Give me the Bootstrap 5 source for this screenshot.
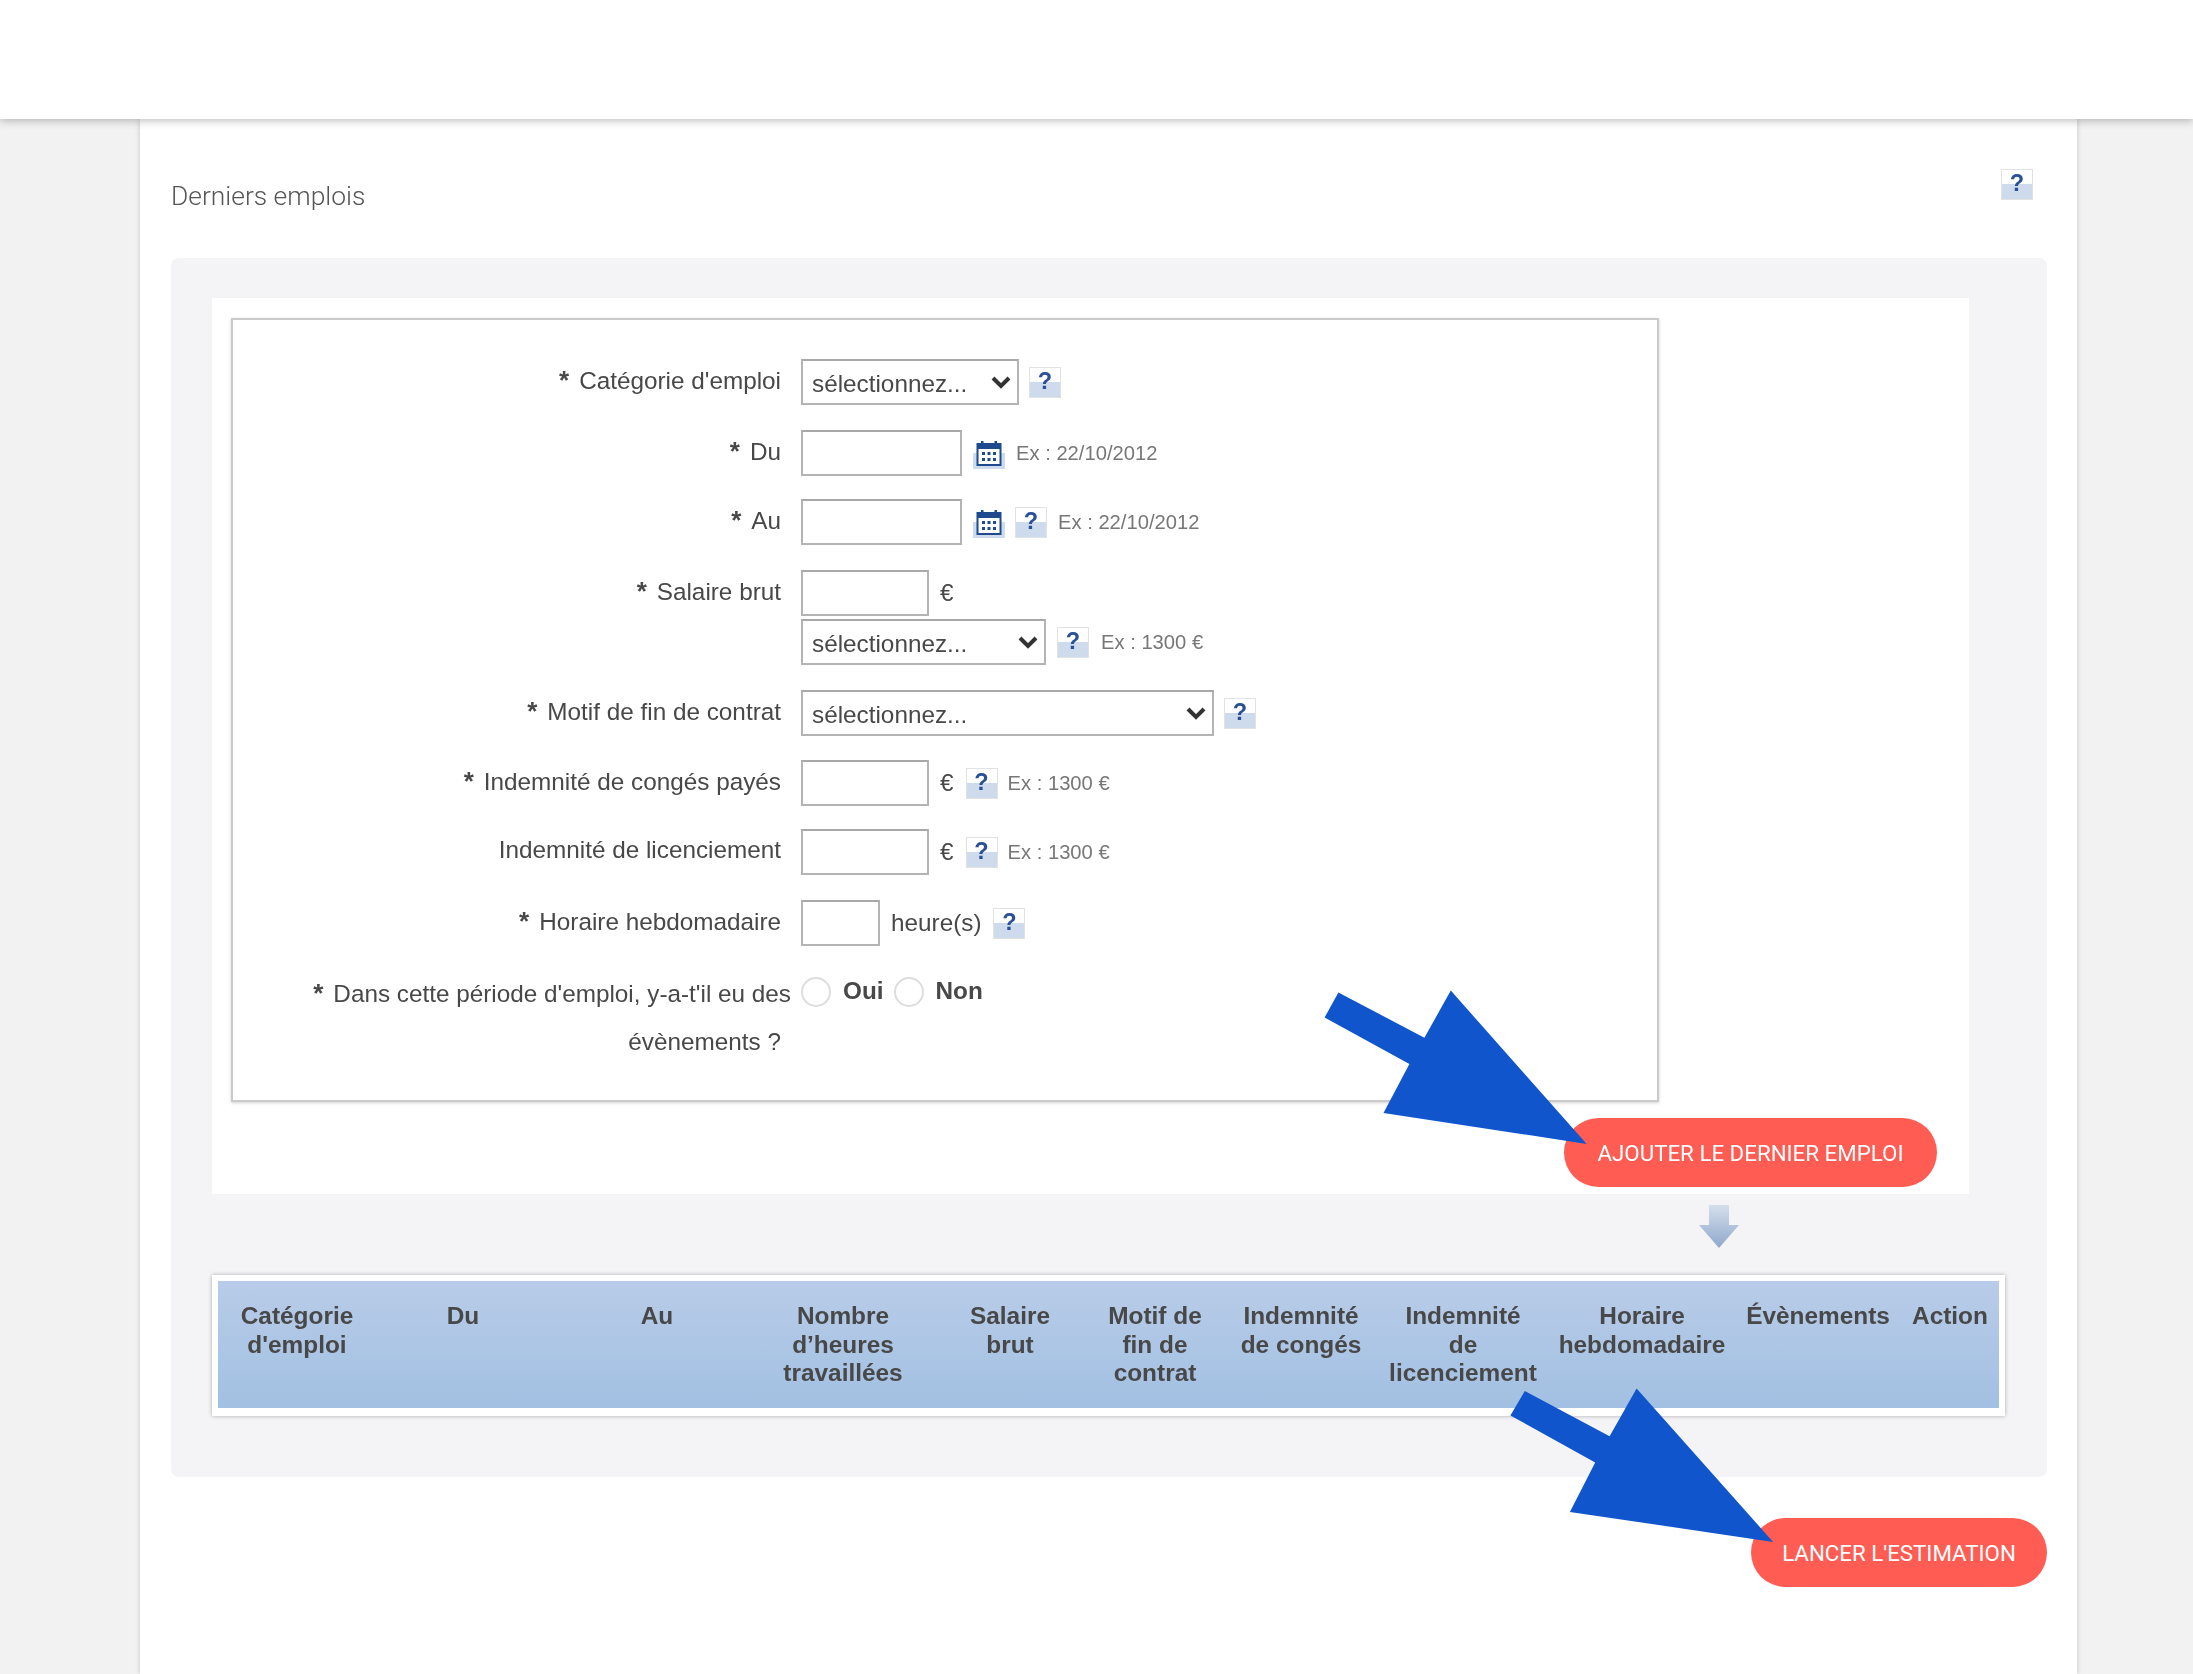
<!DOCTYPE html>
<html lang="fr">
<head>
<meta charset="utf-8">
<title>Derniers emplois</title>
<link href="https://cdn.jsdelivr.net/npm/bootstrap@5.3.0/dist/css/bootstrap.min.css" rel="stylesheet">
<style>
html,body{height:100%;overflow:hidden}
body{background:#f2f2f2;font-family:"Liberation Sans",Arial,sans-serif;color:#484848;position:relative}
.topstrip{height:119px;background:#fff;box-shadow:0 2px 8px rgba(0,0,0,.25);position:relative;z-index:2}
.sheet{margin-left:140px;width:1937px;height:1555px;background:#fff;box-shadow:0 0 5px rgba(0,0,0,.2);padding:0 30px 0 31px}
.softfocus{filter:blur(.7px)}
.titlebar{height:139px;padding-right:14px}
.pagetitle{font-family:Roboto,sans-serif;font-weight:300;font-size:26.4px;color:#555;margin:0;padding-top:62px;line-height:30px}
.titlebar .helpbox{margin-top:50px}
.greypanel{background:#f4f4f6;border-radius:8px;height:1219px;padding:40px 0 0 41px}
.whitepanel{background:#fff;width:1757px;height:896px;padding:20px 32px 0 19px}
.formbox{width:1428px;height:784px;border:2px solid #cbcbcb;box-shadow:0 1px 3px rgba(0,0,0,.18);padding-top:39px;background:#fff}
.frow{display:flex;font-size:24.3px;line-height:46px}
.flabel{width:548px;text-align:right;margin:-2px 20px 0 0;flex:none}
.star{margin-right:10px;font-weight:700;font-size:26px}
.fctl{display:flex;align-items:center;height:46px}
.mb23{margin-bottom:23px}.mb24{margin-bottom:24px}.mb25{margin-bottom:25px}.mb27{margin-bottom:27px}
input.form-control.cellin,select.form-select.cellin{border:2px solid #b4b4b4;border-top-color:#a8a8a8;border-radius:0;height:46px;min-height:0;padding:0 30px 0 9px;font-size:24.3px;color:#484848;font-family:"Liberation Sans",Arial,sans-serif;box-shadow:none;flex:none}
select.form-select.cellin{padding-top:5px;background-image:url("data:image/svg+xml,%3csvg xmlns='http://www.w3.org/2000/svg' viewBox='0 0 20 14'%3e%3cpath fill='none' stroke='%23333' stroke-width='4' d='M2 3l8 8 8-8'/%3e%3c/svg%3e");background-size:20px 14px;background-position:right 6px center}
.w218{width:218px!important}.w160{width:161px!important}.w128{width:128px!important}.w245{width:245px!important}.w413{width:413px!important}.w79{width:79px!important}
.second{margin:3px 0 25px 568px}
.helpbox{display:inline-block;width:32px;height:31px;flex:none;background:linear-gradient(#fff 0 48%,#cddbec 48% 100%);border:1px solid #e2e2e2;color:#2a5198;font-weight:700;font-size:23.5px;line-height:27px;text-align:center}
.calbox{width:32px;height:31px;flex:none;display:block}
.ms11{margin-left:11px}.ms10{margin-left:10px}.ms12{margin-left:12px}
.hint{font-size:20.2px;color:#777;white-space:nowrap}
.radiolabel{width:558px;margin:-4px 10px 0 0;text-align:right;flex:none;line-height:48px;font-size:24.3px;white-space:nowrap}
.radiolabel span.tail{display:block;margin-right:10px}
.radioset{display:flex;align-items:flex-start;font-weight:700;height:36px;line-height:36px}
.form-check-input.roundin{width:30px;height:30px;margin:4px 12px 0 0;border:2px solid #ddd;background-color:#fff;flex:none;float:none}
.roundin.later{margin-left:10px}
.pillbtn{display:inline-block;background:#ff5c53;color:#fff;font-family:Roboto,sans-serif;font-size:22.3px;border:0;border-radius:35px;height:69px;line-height:71px;padding:0;text-align:center;text-transform:uppercase}
.pillbtn:hover{background:#ff5c53;color:#fff}
.pill1{width:373px}.pill2{width:296px}
.addwrap{margin-top:16px}
.downrow{height:81px;padding:11px 0 0 1486px}
.tblframe{width:1793px;height:141px;border:6px solid #fff;border-bottom-width:8px;box-shadow:0 0 4px rgba(0,0,0,.3);background:linear-gradient(#b8cce8,#a2c0e2)}
table.table.heads{table-layout:fixed;width:1781px;margin:0;--bs-table-bg:transparent;background:transparent}
table.heads thead,table.heads tr,table.heads th{vertical-align:top}
table.heads th{border:0;padding:21px 0 0;line-height:28.5px;font-size:24.4px;font-weight:700;color:#484848;text-align:center;white-space:nowrap;background:transparent;box-shadow:none}
table.heads th.firstcol{padding-left:13px}
.launchrow{margin-top:41px}
.pointers{position:absolute;left:0;top:0;width:2193px;height:1674px;pointer-events:none;z-index:3}
</style>
</head>
<body>
<div class="topstrip"></div>
<main class="sheet">
  <div class="titlebar d-flex justify-content-between align-items-start softfocus">
    <h1 class="pagetitle">Derniers emplois</h1>
    <span class="helpbox">?</span>
  </div>
  <section class="greypanel">
    <div class="whitepanel softfocus">
      <form class="formbox">
        <div class="frow mb25">
          <label class="flabel"><span class="star">*</span>Catégorie d'emploi</label>
          <div class="fctl"><select class="form-select cellin w218"><option>sélectionnez...</option></select><span class="helpbox ms10">?</span></div>
        </div>
        <div class="frow mb23">
          <label class="flabel"><span class="star">*</span>Du</label>
          <div class="fctl"><input class="form-control cellin w160" type="text">
            <svg class="calbox ms11" viewBox="0 0 32 31"><rect width="32" height="31" fill="#fff"/><rect y="15" width="32" height="16" fill="#cddbec"/><rect x="4.5" y="6" width="23" height="21" fill="#fff" stroke="#1f4a8e" stroke-width="2"/><rect x="4" y="5" width="24" height="6" fill="#1f4a8e"/><rect x="8" y="3" width="2.5" height="5" fill="#1f4a8e"/><rect x="21.5" y="3" width="2.5" height="5" fill="#1f4a8e"/><g fill="#1f4a8e"><rect x="9" y="14" width="3" height="3"/><rect x="14.5" y="14" width="3" height="3"/><rect x="20" y="14" width="3" height="3"/><rect x="9" y="20" width="3" height="3"/><rect x="14.5" y="20" width="3" height="3"/><rect x="20" y="20" width="3" height="3"/></g></svg>
            <span class="hint ms11">Ex : 22/10/2012</span></div>
        </div>
        <div class="frow mb25">
          <label class="flabel"><span class="star">*</span>Au</label>
          <div class="fctl"><input class="form-control cellin w160" type="text">
            <svg class="calbox ms11" viewBox="0 0 32 31"><rect width="32" height="31" fill="#fff"/><rect y="15" width="32" height="16" fill="#cddbec"/><rect x="4.5" y="6" width="23" height="21" fill="#fff" stroke="#1f4a8e" stroke-width="2"/><rect x="4" y="5" width="24" height="6" fill="#1f4a8e"/><rect x="8" y="3" width="2.5" height="5" fill="#1f4a8e"/><rect x="21.5" y="3" width="2.5" height="5" fill="#1f4a8e"/><g fill="#1f4a8e"><rect x="9" y="14" width="3" height="3"/><rect x="14.5" y="14" width="3" height="3"/><rect x="20" y="14" width="3" height="3"/><rect x="9" y="20" width="3" height="3"/><rect x="14.5" y="20" width="3" height="3"/><rect x="20" y="20" width="3" height="3"/></g></svg>
            <span class="helpbox ms10">?</span><span class="hint ms11">Ex : 22/10/2012</span></div>
        </div>
        <div class="frow">
          <label class="flabel"><span class="star">*</span>Salaire brut</label>
          <div class="fctl"><input class="form-control cellin w128" type="text"><span class="ms11">€</span></div>
        </div>
        <div class="frow second">
          <div class="fctl"><select class="form-select cellin w245"><option>sélectionnez...</option></select><span class="helpbox ms11">?</span><span class="hint ms12">Ex : 1300 €</span></div>
        </div>
        <div class="frow mb24">
          <label class="flabel"><span class="star">*</span>Motif de fin de contrat</label>
          <div class="fctl"><select class="form-select cellin w413"><option>sélectionnez...</option></select><span class="helpbox ms10">?</span></div>
        </div>
        <div class="frow mb23">
          <label class="flabel"><span class="star">*</span>Indemnité de congés payés</label>
          <div class="fctl"><input class="form-control cellin w128" type="text"><span class="ms11">€</span><span class="helpbox ms12">?</span><span class="hint ms10">Ex : 1300 €</span></div>
        </div>
        <div class="frow mb25">
          <label class="flabel">Indemnité de licenciement</label>
          <div class="fctl"><input class="form-control cellin w128" type="text"><span class="ms11">€</span><span class="helpbox ms12">?</span><span class="hint ms10">Ex : 1300 €</span></div>
        </div>
        <div class="frow mb27">
          <label class="flabel"><span class="star">*</span>Horaire hebdomadaire</label>
          <div class="fctl"><input class="form-control cellin w79" type="text"><span class="ms11">heure(s)</span><span class="helpbox ms12">?</span></div>
        </div>
        <div class="frow">
          <label class="radiolabel"><span class="star">*</span>Dans cette période d'emploi, y-a-t'il eu des <span class="tail">évènements ?</span></label>
          <div class="radioset"><input class="form-check-input roundin" type="radio" name="evt"><span>Oui</span><input class="form-check-input roundin later" type="radio" name="evt"><span>Non</span></div>
        </div>
      </form>
      <div class="addwrap text-end"><button type="button" class="pillbtn pill1">Ajouter le dernier emploi</button></div>
    </div>
    <div class="downrow">
      <svg width="42" height="43" viewBox="0 0 42 43"><defs><linearGradient id="dn" x1="0" y1="0" x2="0" y2="1"><stop offset="0" stop-color="#d5dfec"/><stop offset="1" stop-color="#8ea8cb"/></linearGradient></defs><path d="M11 0H31V20H41L21 43 1 20H11Z" fill="url(#dn)"/></svg>
    </div>
    <div class="tblframe softfocus">
      <table class="table heads">
        <colgroup><col style="width:145px"><col style="width:200px"><col style="width:188px"><col style="width:184px"><col style="width:150px"><col style="width:140px"><col style="width:152px"><col style="width:172px"><col style="width:186px"><col style="width:166px"><col style="width:98px"></colgroup>
        <thead><tr>
          <th class="firstcol">Catégorie<br>d'emploi</th><th>Du</th><th>Au</th><th>Nombre<br>d’heures<br>travaillées</th><th>Salaire<br>brut</th><th>Motif de<br>fin de<br>contrat</th><th>Indemnité<br>de congés</th><th>Indemnité<br>de<br>licenciement</th><th>Horaire<br>hebdomadaire</th><th>Évènements</th><th>Action</th>
        </tr></thead>
      </table>
    </div>
  </section>
  <div class="launchrow text-end"><button type="button" class="pillbtn pill2">Lancer l'estimation</button></div>
</main>
<svg class="pointers" viewBox="0 0 2193 1674"><g fill="#1155cc">
<polygon points="1338.4,992.5 1324.6,1017.4 1409.4,1064 1383.5,1113 1586.7,1143.9 1450.8,990.6 1424.4,1037.7"/>
<polygon points="1524.8,1390.9 1510.4,1415.4 1595.2,1462.5 1569.9,1511.9 1773.1,1541.9 1636.6,1388.6 1609.6,1436.2"/>
</g></svg>
<script src="https://cdn.jsdelivr.net/npm/bootstrap@5.3.0/dist/js/bootstrap.bundle.min.js"></script>
</body>
</html>
